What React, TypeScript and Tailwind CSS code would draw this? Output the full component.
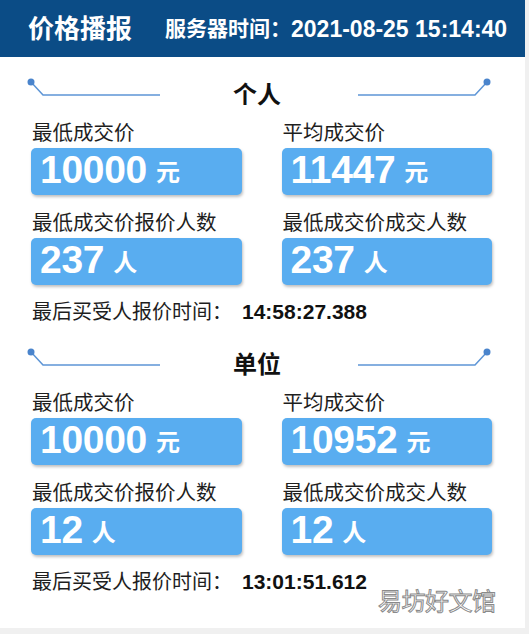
import React from "react";

const FONT = { fontFamily: '"Liberation Sans", "Noto Sans CJK SC", sans-serif' };

function LeftDeco() {
  return (
    <svg width="136" height="36" viewBox="0 0 136 36">
      <polyline points="5,5 17,18 134,18" fill="none" stroke="#5d95d6" strokeWidth="1.5" />
      <circle cx="5" cy="5" r="3.5" fill="#4a84cc" />
    </svg>
  );
}

function RightDeco() {
  return (
    <svg width="136" height="36" viewBox="0 0 136 36">
      <polyline points="2,18 119,18 131,5" fill="none" stroke="#5d95d6" strokeWidth="1.5" />
      <circle cx="131" cy="5" r="3.5" fill="#4a84cc" />
    </svg>
  );
}

function Cell({ label, value, unit }: { label: string; value: string; unit: string }) {
  return (
    <div className="flex flex-col">
      <div className="h-[24px] text-[20.5px] leading-[24px] text-[#1e1e1e] pl-[1px] whitespace-nowrap">{label}</div>
      <div className="mt-[3px] h-[47px] rounded-[5px] bg-[#59adf0] shadow-[1px_2px_3px_rgba(0,0,0,0.25)] flex items-end pl-[9px] pb-[3px]">
        <span className="text-[39px] leading-[44px] font-bold text-white tracking-[-0.3px]">{value}</span>
        <span className="ml-[9px] text-[24px] leading-[38px] font-bold text-white">{unit}</span>
      </div>
    </div>
  );
}

function Section({
  title,
  items,
  time,
  className,
}: {
  title: string;
  items: { label: string; value: string; unit: string }[];
  time: string;
  className: string;
}) {
  return (
    <div className={className}>
      <div className="grid grid-cols-[136px_1fr_136px] items-center h-[36px] pl-[26px] pr-[33px]">
        <LeftDeco />
        <div className="text-center text-[24px] leading-[36px] font-bold text-[#111] pr-[4px]">{title}</div>
        <RightDeco />
      </div>
      <div className="mt-[8px] grid grid-cols-2 gap-x-[40px] gap-y-[16px] pl-[31px] pr-[33px]">
        {items.map((it, i) => (
          <Cell key={i} {...it} />
        ))}
      </div>
      <div className="mt-[15px] h-[24px] pl-[32px] flex items-center text-[20px] leading-[24px] text-[#1e1e1e]">
        <span>最后买受人报价时间：</span>
        <span className="ml-[10px] text-[21px] font-bold text-[#111]">{time}</span>
      </div>
    </div>
  );
}

export default function App() {
  return (
    <div className="w-[529px] h-[634px] bg-[#f0f0f0] overflow-hidden" style={FONT}>
      <div className="relative w-[525px] h-[628px] bg-white">
        <div className="h-[57px] bg-[#0b4c86] flex items-center pl-[28px] text-white font-bold whitespace-nowrap">
          <span className="text-[26px] leading-[30px]">价格播报</span>
          <span className="ml-[33px] text-[21px] leading-[30px]">服务器时间：</span>
          <span className="text-[23px] leading-[30px]">2021-08-25 15:14:40</span>
        </div>
        <Section
          className="pt-[20px]"
          title="个人"
          items={[
            { label: "最低成交价", value: "10000", unit: "元" },
            { label: "平均成交价", value: "11447", unit: "元" },
            { label: "最低成交价报价人数", value: "237", unit: "人" },
            { label: "最低成交价成交人数", value: "237", unit: "人" },
          ]}
          time="14:58:27.388"
        />
        <Section
          className="mt-[23px]"
          title="单位"
          items={[
            { label: "最低成交价", value: "10000", unit: "元" },
            { label: "平均成交价", value: "10952", unit: "元" },
            { label: "最低成交价报价人数", value: "12", unit: "人" },
            { label: "最低成交价成交人数", value: "12", unit: "人" },
          ]}
          time="13:01:51.612"
        />
        <div className="absolute left-[378px] top-[588px] text-[24px] leading-[28px] text-white [-webkit-text-stroke:1px_#8a8a8a] tracking-[-0.5px]">
          易坊好文馆
        </div>
      </div>
    </div>
  );
}
